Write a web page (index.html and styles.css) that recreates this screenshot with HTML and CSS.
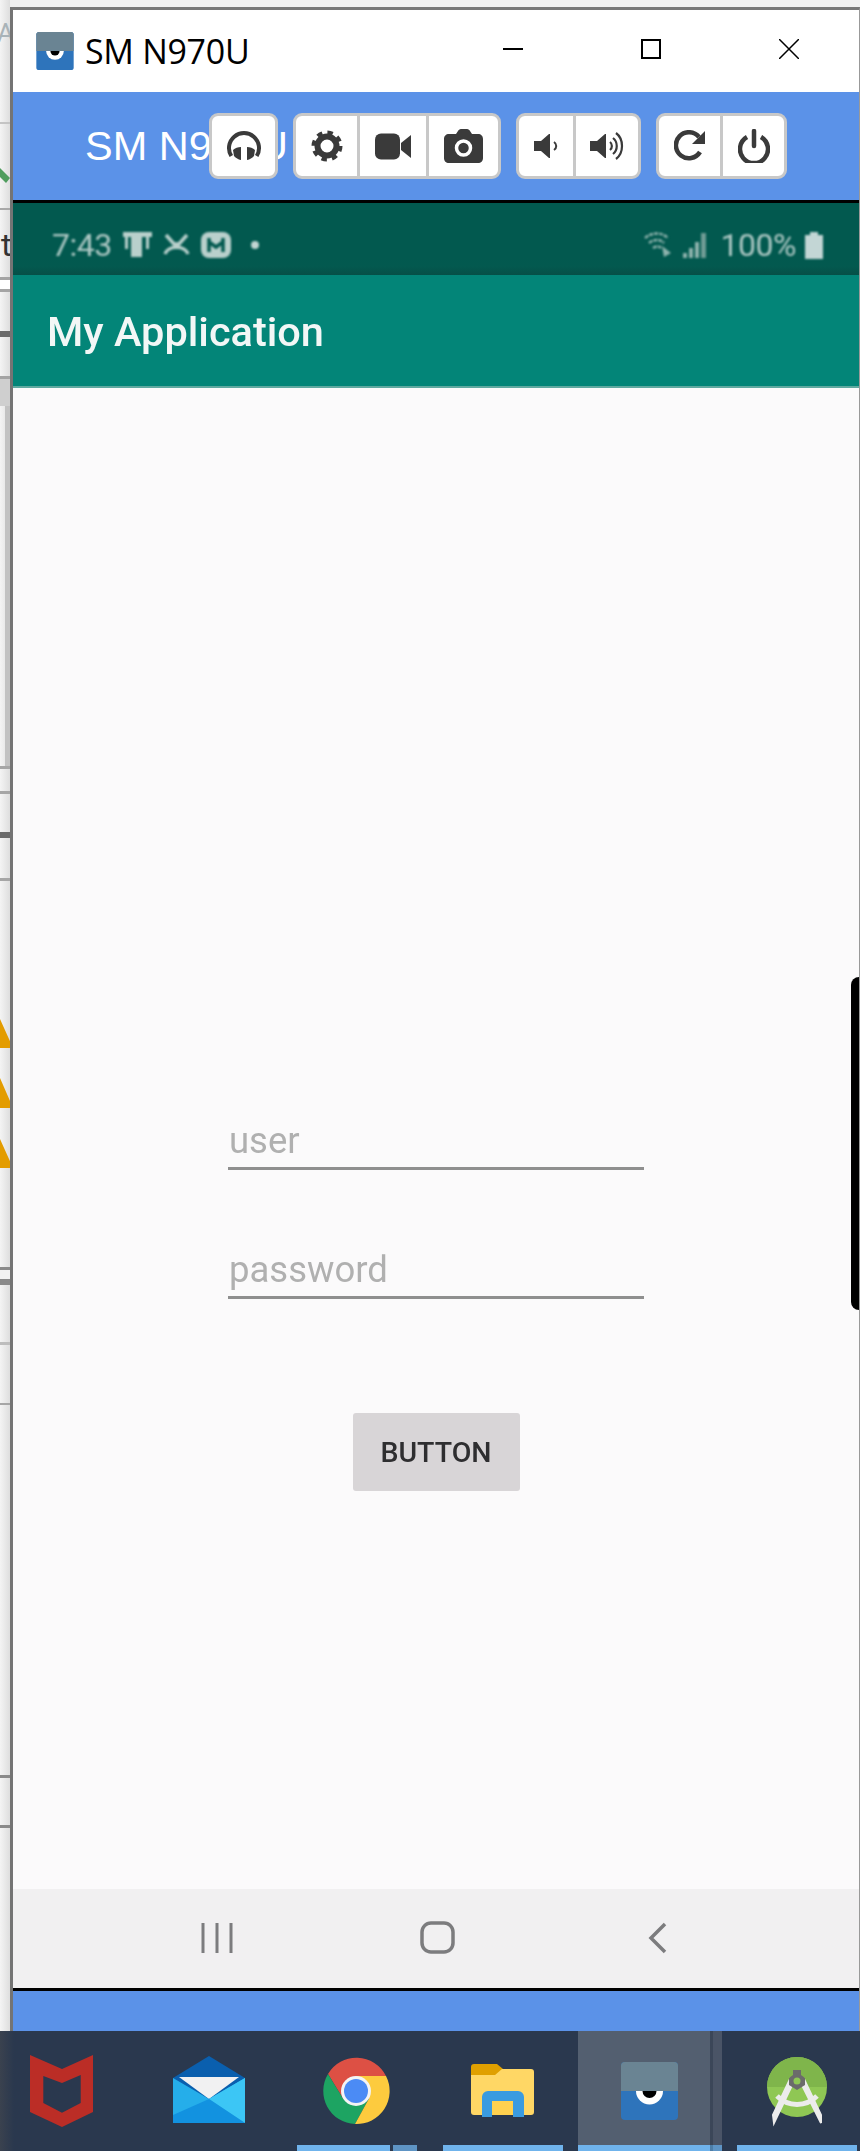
FILE: index.html
```html
<!DOCTYPE html>
<html lang="en">
<head>
<meta charset="utf-8">
<title>SM N970U</title>
<link rel="stylesheet" href="styles.css">
</head>
<body>
<svg class="defs" width="0" height="0" aria-hidden="true">
  <symbol id="eye" viewBox="0 0 57 58">
    <rect width="57" height="58" rx="4" fill="#2e74bb"/>
    <path d="M0 29V4a4 4 0 0 1 4-4h49a4 4 0 0 1 4 4v25z" fill="#6a8493"/>
    <path d="M15 29a13.5 13.5 0 0 0 27 0z" fill="#fff"/>
    <path d="M21.500 29a7 7 0 0 0 14 0z" fill="#000"/>
  </symbol>
</svg>
<div class="desk">
  <aside class="strip">
    <span class="strip-a">A</span>
    <svg class="strip-tick" width="13" height="24" viewBox="0 0 13 24"><path d="M0 2l13 13-4 5L0 11z" fill="#4f9d5e"/></svg>
    <span class="strip-t">t</span>
    <svg class="strip-warn" width="13" height="150" viewBox="0 0 13 150"><path d="M0 0l13 29H0zM0 59l13 30H0zM0 120l13 29H0z" fill="#e39c00"/></svg>
  </aside>
  <main class="window">
    <header class="titlebar">
      <svg class="app-icon" width="38" height="38"><use href="#eye"/></svg>
      <span class="app-name">SM N970U</span>
      <div class="win-controls">
        <svg class="win-btn" width="20" height="20" viewBox="0 0 20 20"><path d="M0 10h20" stroke="#000" stroke-width="2"/></svg>
        <svg class="win-btn" width="20" height="20" viewBox="0 0 20 20"><rect x="1" y="1" width="18" height="18" fill="none" stroke="#000" stroke-width="2"/></svg>
        <svg class="win-btn" width="20" height="20" viewBox="0 0 20 20"><path d="M0 0l20 20M20 0L0 20" stroke="#000" stroke-width="1.500"/></svg>
      </div>
    </header>
    <div class="toolbar">
      <span class="device-name">SM N970U</span>
      <div class="group">
        <button class="tool w63"><svg width="36" height="30" viewBox="0 0 36 30"><path d="M5.300 25A15 15 0 1 1 30.700 25" fill="none" stroke="#3a3a3a" stroke-width="4"/><path d="M7 19c2-2 5-3 8-3v13c-3-.5-5-2-7-4zM29 19c-2-2-5-3-8-3v13c3-.5 5-2 7-4z" fill="#3a3a3a"/></svg></button>
      </div>
      <div class="group">
        <button class="tool w61"><svg width="32" height="32" viewBox="0 0 32 32"><circle cx="16" cy="16" r="12.500" fill="none" stroke="#3a3a3a" stroke-width="6" stroke-dasharray="5 4.820"/><circle cx="16" cy="16" r="9.500" fill="none" stroke="#3a3a3a" stroke-width="6"/></svg></button>
        <button class="tool w66"><svg width="36" height="27" viewBox="0 0 36 27"><rect width="25" height="26" y="0.500" rx="6" fill="#3a3a3a"/><path d="M26 10l10-8v23l-10-8z" fill="#3a3a3a"/></svg></button>
        <button class="tool w69"><svg width="39" height="34" viewBox="0 0 39 34"><path d="M12 5l2-3c.500-1 1.500-2 3-2h6c1.500 0 2.500 1 3 2l2 3h6c3 0 5 2 5 5v19c0 3-2 5-5 5H5c-3 0-5-2-5-5V10c0-3 2-5 5-5z" fill="#3a3a3a"/><circle cx="19.500" cy="19" r="7" fill="none" stroke="#fff" stroke-width="3.500"/></svg></button>
      </div>
      <div class="group">
        <button class="tool w54"><svg width="24" height="24" viewBox="0 0 24 24"><path d="M0 7h7l8-7h1v24h-1l-8-7H0z" fill="#3a3a3a"/><path d="M20 8c3 2 3 6 0 8" fill="none" stroke="#3a3a3a" stroke-width="2"/></svg></button>
        <button class="tool w62"><svg width="34" height="28" viewBox="0 0 34 28"><path d="M0 9h7l8-7h1v24h-1l-8-7H0z" fill="#3a3a3a"/><path d="M20 10c2.500 2 2.500 6 0 8M23 6c5 4 5 12 0 16M26 1c8 6 8 20 0 26" fill="none" stroke="#3a3a3a" stroke-width="2.200"/></svg></button>
      </div>
      <div class="group">
        <button class="tool w61"><svg width="32" height="32" viewBox="0 0 32 32"><path d="M26 22A13 13 0 1 1 25 7" fill="none" stroke="#3a3a3a" stroke-width="4.500"/><path d="M31 1v13H18z" fill="#3a3a3a"/></svg></button>
        <button class="tool w61"><svg width="32" height="34" viewBox="0 0 32 34"><path d="M9 8a14 14 0 1 0 14 0" fill="none" stroke="#3a3a3a" stroke-width="4.500"/><path d="M16 2v15" stroke="#3a3a3a" stroke-width="4.500" stroke-linecap="round"/></svg></button>
      </div>
    </div>
    <section class="phone">
      <div class="statusbar">
        <div class="status-side">
          <span class="status-text">7:43</span>
          <svg class="status-icon" width="29" height="26" viewBox="0 0 29 26"><path d="M0 0h29v5h-3v12h-3V5h-4v20H8V5H5v12H2V5H0z" fill="#b9d0cc"/></svg>
          <svg class="status-icon" width="27" height="26" viewBox="0 0 27 26"><path d="M3 3l8 9h5l8-9M2 22c3-9 20-9 23 0" fill="none" stroke="#b9d0cc" stroke-width="3.500"/></svg>
          <svg class="status-icon" width="30" height="26" viewBox="0 0 30 26"><rect width="30" height="26" rx="8" fill="#b9d0cc"/><path d="M8 6v14M22 6v14M8 10l7 5 7-5" fill="none" stroke="#02594f" stroke-width="3.500"/></svg>
          <span class="status-dot"></span>
        </div>
        <div class="status-side">
          <svg class="status-wifi" width="29" height="26" viewBox="0 0 29 26"><path d="M1 6c7-6 17-6 23 0M5 11c5-4 11-4 15 0M9 16c3-2 6-2 8 0" fill="none" stroke="#8eb3ad" stroke-width="2.500" stroke-dasharray="4 1"/><path d="M18 14l9 7-7 4z" fill="#8eb3ad"/></svg>
          <svg class="status-signal" width="24" height="25" viewBox="0 0 24 25"><path d="M0 25v-5h4v5zM6 25V15h4v10zM12 25V9h4v16z" fill="#8eb3ad"/><path d="M18 25V0h5v25z" fill="#6f9c95"/></svg>
          <span class="status-text percent">100%</span>
          <svg class="status-battery" width="18" height="27" viewBox="0 0 18 27"><path d="M5 0h8v3h5v24H0V3h5z" fill="#c3d6d5"/></svg>
        </div>
      </div>
      <div class="appbar"><h1 class="app-title">My Application</h1></div>
      <div class="content">
        <div class="field">user</div>
        <div class="field second">password</div>
        <button class="btn">BUTTON</button>
        <span class="edge"></span>
      </div>
      <nav class="navbar">
        <svg class="nav-icon" width="34" height="32" viewBox="0 0 34 32"><path d="M3 1v30M17 1v30M31 1v30" stroke="#7c7c7e" stroke-width="3"/></svg>
        <svg class="nav-icon" width="35" height="33" viewBox="0 0 35 33"><rect x="2" y="2" width="31" height="29" rx="9" fill="none" stroke="#7c7c7e" stroke-width="3.500"/></svg>
        <svg class="nav-icon nav-back" width="20" height="32" viewBox="0 0 20 32"><path d="M17 2L3 16l14 14" fill="none" stroke="#7c7c7e" stroke-width="3.500"/></svg>
      </nav>
    </section>
    <div class="bottom-bar"></div>
  </main>
</div>
<footer class="taskbar">
  <div class="tile">
    <svg width="72" height="72" viewBox="0 0 72 72"><path fill-rule="evenodd" d="M4 0l32 14L67 0v57L36 72 4 57zM17.300 21v27L36 57.700 54.700 48V20L36 28z" fill="#bb2d26"/></svg>
  </div>
  <div class="tile">
    <svg width="72" height="72" viewBox="0 0 72 72"><path d="M36 1L0 23v45h72V23z" fill="#0a5fae"/><path d="M6 22h60L36 44z" fill="#f1f1f2"/><path d="M0 23l36 21 36-21v45H0z" fill="#25aeea"/><path d="M36 44l36-21v45z" fill="#3cc6f5"/><path d="M0 68v-8l36-16 36 24z" fill="#1292e0"/></svg>
  </div>
  <div class="tile tile-open">
    <svg width="72" height="72" viewBox="0 0 72 72"><path d="M36 21H66A33 33 0 0 0 8 19L23 43.500z" fill="#dd5044"/><path d="M23 43.500L8 19A33 33 0 0 0 35 69L49 43.500z" fill="#1da462"/><path d="M49 43.500L35 69A33 33 0 0 0 66 21H36z" fill="#fdcb3e"/><circle cx="36" cy="36" r="15" fill="#f4f4f4"/><circle cx="36" cy="36" r="12" fill="#4b8bf5"/></svg>
  </div>
  <div class="tile tile-open">
    <svg width="72" height="72" viewBox="0 0 72 72"><path d="M4 12a3 3 0 0 1 3-3h23l6 5v6H4z" fill="#e0a000"/><path d="M4 20h24l7-6h29a3 3 0 0 1 3 3v40a3 3 0 0 1-3 3H7a3 3 0 0 1-3-3z" fill="#ffd765"/><path d="M15 62V42a6 6 0 0 1 6-6h30a6 6 0 0 1 6 6v20H46V46H25v16z" fill="#3a9be0"/><path d="M25 46h21v14H25z" fill="#ffd14f"/></svg>
  </div>
  <div class="tile tile-active">
    <svg width="57" height="58" class="tile-eye"><use href="#eye"/></svg>
  </div>
  <div class="tile tile-open">
    <svg width="72" height="72" viewBox="0 0 72 72"><circle cx="36" cy="32" r="30" fill="#8fc754"/><path d="M6 32a30 30 0 0 1 60 0z" fill="#7fb54b"/><path d="M16 41a28 28 0 0 0 40 0" fill="none" stroke="#ececec" stroke-width="5"/><path d="M33 26L13 68l-1-8 17-36zM39 26l21 42 0-8-17-36z" fill="#ececec" stroke="#ececec" stroke-width="2"/><path d="M32 15h8v5l4 3v7l-8 5-8-5v-7l4-3z" fill="#6b6b6b"/><circle cx="36" cy="26" r="3.500" fill="#8fc754"/></svg>
  </div>
</footer>
</body>
</html>
```

FILE: styles.css
```css
* { box-sizing: border-box; }
html, body { margin: 0; padding: 0; }
body {
  width: 860px;
  height: 2151px;
  overflow: hidden;
  background: #f0f0f0;
  font-family: Roboto, "Liberation Sans", sans-serif;
}
.defs { position: absolute; }

.desk {
  display: grid;
  grid-template-columns: 10px 1fr;
  height: 2031px;
  padding-top: 7px;
}

/* sliver of the windows behind */
.strip {
  position: relative;
  margin-top: -7px;
  height: 2031px;
  overflow: hidden;
  background:
    linear-gradient(to bottom,
      transparent 122px, #c4c4c4 122px 124px, transparent 124px 208px,
      #a8a8a8 208px 210px, transparent 210px 277px,
      #a4a4a4 277px 280px, #fff 280px 289px, #a4a4a4 289px 292px, transparent 292px 331px,
      #6a6a6a 331px 337px, transparent 337px 376px,
      #a4a4a4 376px 379px, #cfcfcf 379px 406px, transparent 406px 766px,
      #a6a6a6 766px 769px, transparent 769px 791px,
      #a6a6a6 791px 794px, transparent 794px 832px,
      #6a6a6a 832px 838px, transparent 838px 878px,
      #a6a6a6 878px 881px, transparent 881px 1267px,
      #8a8a8a 1267px 1270px, #f2f2f2 1270px 1279px, #8a8a8a 1279px 1285px, transparent 1285px 1342px,
      #bdbdbd 1342px 1345px, transparent 1345px 1403px,
      #a6a6a6 1403px 1405px, transparent 1405px 1775px,
      #8a8a8a 1775px 1778px, transparent 1778px 1825px,
      #8a8a8a 1825px 1828px, transparent 1828px),
    linear-gradient(to right, transparent 5px, #c2c2c2 5px) 0 406px / 10px 360px no-repeat,
    linear-gradient(to right, #f4f4f4, #dedede);
}
.strip-a {
  position: absolute;
  left: -3px;
  top: 18px;
  font-size: 26px;
  color: #a9b3b8;
}
.strip-tick { position: absolute; left: -3px; top: 163px; }
.strip-t {
  position: absolute;
  left: 1px;
  top: 226px;
  font-size: 32px;
  line-height: 38px;
  color: #333;
}
.strip-warn { position: absolute; left: 0; top: 1019px; }

.window {
  display: flex;
  flex-direction: column;
  height: 2024px;
  border-top: 3px solid #777;
  border-left: 3px solid #747474;
  border-right: 1px solid #999;
  background: #fff;
}

.titlebar {
  flex: 0 0 82px;
  display: flex;
  align-items: center;
  padding-left: 23px;
  background: #fff;
}
.app-icon { margin-right: 11px; }
.app-name {
  font-family: "Open Sans", "Noto Sans", sans-serif;
  font-size: 34px;
  letter-spacing: -0.3px;
  color: #000;
}
.win-controls {
  display: flex;
  gap: 118px;
  margin-left: auto;
  padding-right: 60px;
  margin-top: -4px;
}
.win-btn { display: block; }

.toolbar {
  flex: 0 0 111px;
  display: flex;
  align-items: center;
  gap: 15px;
  padding-left: 72px;
  background: #5b92e8;
  border-bottom: 3px solid #000;
}
.device-name {
  flex: 0 0 109px;
  min-width: 0;
  white-space: nowrap;
  font-family: "Liberation Sans", Arial, sans-serif;
  font-size: 41.500px;
  color: #fff;
}
.group {
  display: flex;
  height: 66px;
  background: #fff;
  border: 3px solid #c8c8c8;
  border-radius: 9px;
}
.tool {
  display: flex;
  align-items: center;
  justify-content: center;
  padding: 0;
  border: 0;
  background: none;
  border-left: 3px solid #c8c8c8;
}
.tool:first-child { border-left: 0; }
.w63 { width: 63px; }
.w61 { width: 61px; }
.w66 { width: 69px; }
.w69 { width: 72px; }
.w54 { width: 54px; }
.w62 { width: 65px; }
.tool.w61 + .tool.w61 { width: 64px; }

.phone {
  flex: 1;
  display: flex;
  flex-direction: column;
}
.statusbar {
  flex: 0 0 72px;
  display: flex;
  justify-content: space-between;
  align-items: center;
  padding: 12px 36px 0 39px;
  background: linear-gradient(to bottom, #02594f 0 75%, #03594f 88%, #064f47 100%);
}
.status-side {
  display: flex;
  align-items: center;
  filter: blur(0.8px);
}
.status-text {
  font-size: 32px;
  line-height: 32px;
  letter-spacing: -0.5px;
  color: #afc9c5;
}
.status-icon { margin-left: 11px; }
.status-dot {
  width: 8px;
  height: 8px;
  margin-left: 20px;
  border-radius: 50%;
  background: #c3d6d3;
}
.status-signal { margin-left: 10px; }
.percent { margin-left: 14px; }
.status-battery { margin-left: 9px; }

.appbar {
  flex: 0 0 113px;
  display: flex;
  align-items: center;
  padding: 2px 0 0 34px;
  background: #038578;
  border-bottom: 2px solid #5fa9a0;
}
.app-title {
  margin: 0;
  font-size: 41.500px;
  font-weight: 500;
  color: #f2f7f6;
  filter: blur(0.7px);
}

.content {
  position: relative;
  flex: 1;
  display: flex;
  flex-direction: column;
  align-items: center;
  padding-top: 735px;
  background: #fbfafb;
}
.field {
  width: 416px;
  height: 47px;
  padding-left: 1px;
  border-bottom: 3px solid #8f8f8f;
  font-size: 36.500px;
  line-height: 35px;
  color: #b0b0b0;
  filter: blur(0.6px);
}
.second { margin-top: 82px; }
.btn {
  width: 167px;
  height: 78px;
  margin-top: 114px;
  padding: 0;
  border: 0;
  border-radius: 3px;
  background: #d8d5d7;
  font-family: Roboto, sans-serif;
  font-size: 28.500px;
  font-weight: 500;
  color: #2e2e30;
  filter: blur(0.4px);
}
.edge {
  position: absolute;
  right: 0;
  top: 589px;
  width: 8px;
  height: 333px;
  background: #000;
  border-radius: 10px 0 0 10px;
  filter: blur(0.5px);
}

.navbar {
  flex: 0 0 99px;
  display: flex;
  align-items: center;
  gap: 186px;
  background: #f1f0f1;
  padding-left: 187px;
  padding-bottom: 2px;
}
.nav-icon { filter: blur(0.6px); }
.nav-back { margin-left: 7px; }

.bottom-bar {
  flex: 0 0 43px;
  background: #5b92e8;
  border-top: 3px solid #000;
}

.taskbar {
  display: flex;
  gap: 3px;
  height: 120px;
  margin-left: -10px;
  background: linear-gradient(to right, #46494f 0, #2a384e 24px);
}
.tile {
  flex: 0 0 144px;
  display: flex;
  justify-content: center;
  align-items: flex-start;
  padding-top: 24px;
}
.tile-open {
  background: linear-gradient(#6fb3ec, #6fb3ec) 12px 100% / 120px 6px no-repeat;
}
.tile:nth-child(3) {
  background:
    linear-gradient(to right, #6fb3ec 0 93px, #2a384e 93px 96px, #5e94c4 96px 120px) 13px 100% / 120px 6px no-repeat;
}
.tile-active {
  background:
    linear-gradient(to right, #6fb3ec 0 132px, #4d7ea8 132px 135px, #5e94c4 135px) 0 100% / 100% 6px no-repeat,
    linear-gradient(to right, #535f70 0 132px, #3b4658 132px 135px, #4a5466 135px);
}
.tile-eye { margin-top: 7px; margin-left: -1px; }
```
